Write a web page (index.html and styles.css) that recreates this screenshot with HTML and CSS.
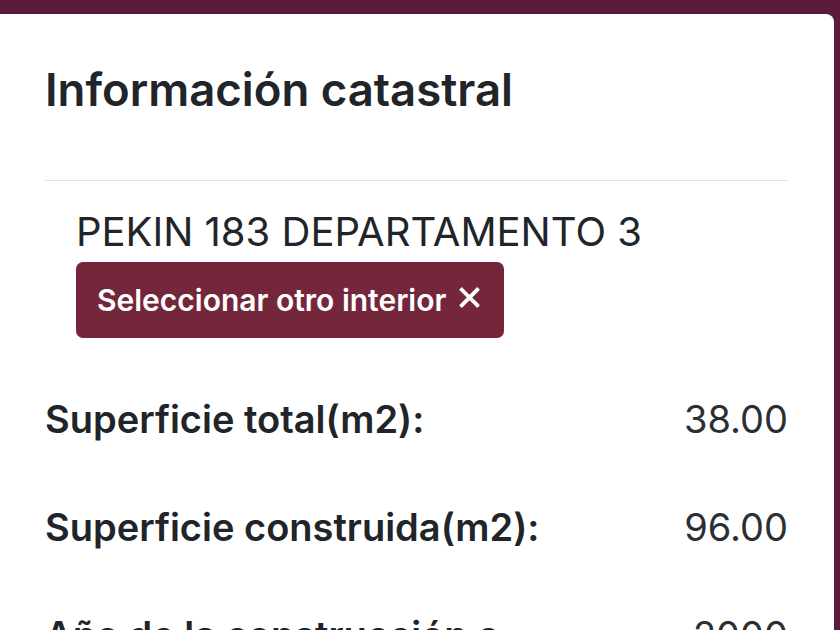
FILE: index.html
```html
<!DOCTYPE html>
<html lang="es">
<head>
<meta charset="utf-8">
<link rel="stylesheet" href="styles.css">
</head>
<body>
<div class="card">
  <h2 class="title">Información catastral</h2>
  <hr class="divider">
  <div class="unit">
    <div class="address">PEKIN 183 DEPARTAMENTO 3</div>
    <button class="btn">Seleccionar otro interior <svg class="x" viewBox="0 0 24 24" width="23" height="23"><path d="M4 4L20 20M20 4L4 20" stroke="#fff" stroke-width="4" stroke-linecap="square" fill="none"/></svg></button>
  </div>
  <div class="rows">
    <div class="row"><span class="label">Superficie total(m2):</span><span class="value">38.00</span></div>
    <div class="row"><span class="label">Superficie construida(m2):</span><span class="value">96.00</span></div>
    <div class="row"><span class="label">Año de la construcción o</span><span class="value">2000</span></div>
  </div>
</div>
</body>
</html>
```
FILE: styles.css
```css
html, body { margin: 0; padding: 0; }
body {
  background: #5c1b3b;
  font-family: Inter, "Noto Sans", sans-serif;
  color: #212529;
  height: 630px;
  overflow: hidden;
}
.card {
  background: #fff;
  margin: 14px 6px 0 -20px;
  border-radius: 8px;
  padding: 49px 46px 0 65px;
  min-height: 700px;
}
.title {
  margin: 0;
  font-size: 45.5px;
  font-weight: 600;
  line-height: 54px;
}
.divider {
  border: 0;
  border-top: 1.5px solid #dee2e6;
  margin: 63px 0 0 0;
}
.unit { padding: 27px 0 0 31px; }
.address {
  font-size: 40px;
  line-height: 47px;
}
.btn {
  margin-top: 7px;
  background: #74263b;
  color: #fff;
  border: 0;
  border-radius: 7px;
  font-family: inherit;
  font-size: 30px;
  font-weight: 600;
  height: 76px;
  padding: 0 23px 0 21px;
  display: inline-flex;
  align-items: center;
  gap: 12px;
}
.x { display: block; margin-top: -6px; }
.rows { padding-top: 58px; }
.row {
  display: flex;
  justify-content: space-between;
  height: 108px;
  font-size: 38px;
  line-height: 46px;
}
.label { font-weight: 600; }
.value { color: #2b2f33; }
```
